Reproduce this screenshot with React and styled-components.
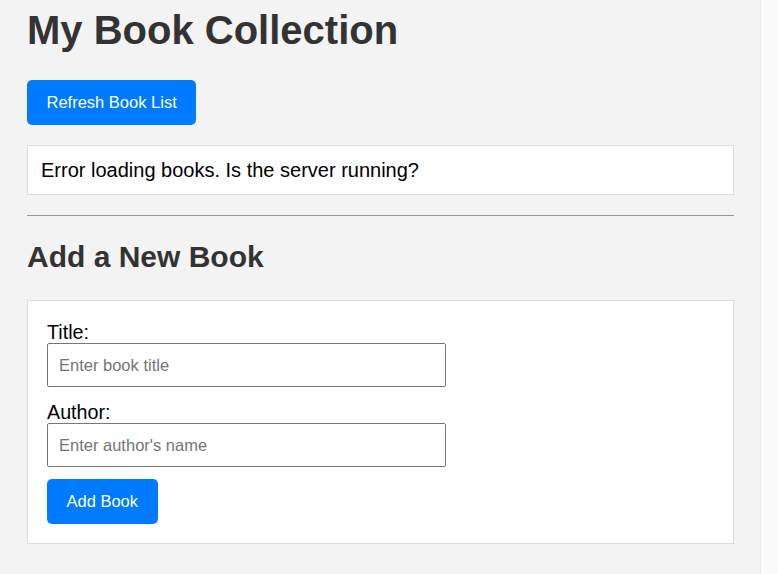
import React from "react";
import styled, { createGlobalStyle } from "styled-components";

const Global = createGlobalStyle`
  html, body { margin: 0; padding: 0; }
  body {
    font-family: "Liberation Sans", Arial, sans-serif;
    background: #f3f3f3;
    width: 778px;
    height: 574px;
    overflow: hidden;
  }
`;

const Shell = styled.div`
  display: flex;
  width: 778px;
  height: 574px;
`;

const Main = styled.main`
  flex: 1;
  background: #f3f3f3;
  padding: 7px 26px 0 27px;
  box-sizing: border-box;
  display: flex;
  flex-direction: column;
`;

const Gutter = styled.div`
  width: 18px;
  background: #fafafa;
  border-left: 1px solid #ececec;
  box-sizing: border-box;
`;

const Title = styled.h1`
  margin: 0 0 27px;
  font-size: 40px;
  line-height: 46px;
  font-weight: 700;
  color: #333;
`;

const Button = styled.button`
  align-self: flex-start;
  height: 45px;
  padding: 0 19.5px;
  border: none;
  border-radius: 5px;
  background: #007bff;
  color: #fff;
  font-family: "Liberation Sans", Arial, sans-serif;
  font-size: 16.5px;
  line-height: 45px;
  cursor: pointer;
`;

const Notice = styled.div`
  margin-top: 20px;
  background: #fff;
  border: 1px solid #dddddd;
  padding: 12px 13px;
  font-size: 20px;
  line-height: 24px;
  color: #000;
`;

const Rule = styled.hr`
  margin: 20px 0 24px;
  border: none;
  border-top: 1px solid #999;
  height: 0;
`;

const Subtitle = styled.h2`
  margin: 0 0 26px;
  font-size: 30px;
  line-height: 34px;
  font-weight: 700;
  color: #333;
`;

const Form = styled.form`
  background: #fff;
  border: 1px solid #dddddd;
  padding: 18px 19px 19px;
  display: flex;
  flex-direction: column;
`;

const Field = styled.div`
  display: flex;
  flex-direction: column;
  margin-bottom: 12px;
`;

const Label = styled.label`
  padding-top: 2px;
  font-size: 19.7px;
  line-height: 22px;
  color: #000;
`;

const Input = styled.input`
  width: 399px;
  height: 44px;
  box-sizing: border-box;
  border: 1px solid #767676;
  border-radius: 2px;
  padding: 0 11px;
  font-family: "Liberation Sans", Arial, sans-serif;
  font-size: 16.5px;
  color: #000;
  background: #fff;
  outline: none;
  &::placeholder { color: #757575; }
`;

export default function App() {
  return (
    <>
      <Global />
      <Shell>
        <Main>
          <Title>My Book Collection</Title>
          <Button type="button">Refresh Book List</Button>
          <Notice>Error loading books. Is the server running?</Notice>
          <Rule />
          <Subtitle>Add a New Book</Subtitle>
          <Form onSubmit={(e) => e.preventDefault()}>
            <Field>
              <Label htmlFor="title">Title:</Label>
              <Input id="title" placeholder="Enter book title" />
            </Field>
            <Field>
              <Label htmlFor="author">Author:</Label>
              <Input id="author" placeholder="Enter author's name" />
            </Field>
            <Button type="submit">Add Book</Button>
          </Form>
        </Main>
        <Gutter />
      </Shell>
    </>
  );
}
